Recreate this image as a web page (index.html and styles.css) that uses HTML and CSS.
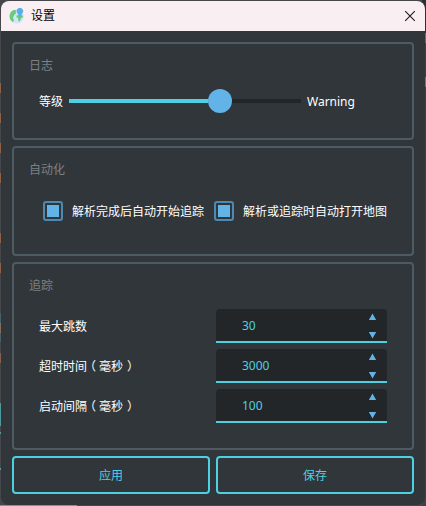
FILE: index.html
```html
<!DOCTYPE html>
<html lang="zh-CN">
<head>
<meta charset="utf-8">
<title>设置</title>
<link rel="stylesheet" href="styles.css">
</head>
<body>
<div class="window">
  <header class="titlebar">
    <svg class="logo" width="16" height="16" viewBox="0 0 16 16"><circle cx="7.6" cy="8.4" r="7.2" fill="#cfe6fb"/><path d="M5 2C1.800 3 .3 6 .6 9c.3 2.300 1.500 4 3.200 4.900L5 12.500 4 9.500l1.200-2.500 1.700-1.600L6.800 2z" fill="#6cca78"/><path d="M7.500 7.500l2-.5 4 .3.500 1.700-2 1.500-1.500 3.200-1.500-1.500.300-2-1.800-1z" fill="#6cca78"/><path d="M10.900 9.500L8.300 5A3.200 3.200 0 1 1 13.500 5z" fill="#5aaee8"/></svg>
    <h1 class="title">设置</h1>
    <svg class="close" width="12" height="12" viewBox="0 0 12 12"><path d="M1.200 1.200l9.600 9.600M10.800 1.200L1.200 10.800" stroke="#1c1a1b" stroke-width="1.100"/></svg>
  </header>
  <main class="content">
    <section class="group log">
      <h2>日志</h2>
      <div class="level"><span class="level-label">等级</span><div class="slider"><div class="fill"></div><div class="handle"></div></div><span class="level-value">Warning</span></div>
    </section>
    <section class="group auto">
      <h2>自动化</h2>
      <div class="checks">
        <label class="check"><span class="box"></span><span class="check-text">解析完成后自动开始追踪</span></label>
        <label class="check"><span class="box"></span><span class="check-text">解析或追踪时自动打开地图</span></label>
      </div>
    </section>
    <section class="group trace">
      <h2>追踪</h2>
      <div class="fields">
        <div class="field"><span class="name">最大跳数</span><div class="spin"><span>30</span><svg width="8" height="26" viewBox="0 0 8 26"><path d="M3.500 .5l3.700 6.500H-.2zM3.500 25.500l3.700-6.500H-.2z"/></svg></div></div>
        <div class="field"><span class="name">超时时间<span class="open">（</span>毫秒<span class="shut">）</span></span><div class="spin"><span>3000</span><svg width="8" height="26" viewBox="0 0 8 26"><path d="M3.500 .5l3.700 6.500H-.2zM3.500 25.500l3.700-6.500H-.2z"/></svg></div></div>
        <div class="field"><span class="name">启动间隔<span class="open">（</span>毫秒<span class="shut">）</span></span><div class="spin"><span>100</span><svg width="8" height="26" viewBox="0 0 8 26"><path d="M3.500 .5l3.700 6.500H-.2zM3.500 25.500l3.700-6.500H-.2z"/></svg></div></div>
      </div>
    </section>
    <div class="actions"><button>应用</button><button>保存</button></div>
  </main>
</div>
</body>
</html>
```
FILE: styles.css
```css
* { box-sizing: border-box; }
body {
  margin: 0; padding: 1px; height: 506px; overflow: hidden;
  font: 12px/16px "Noto Sans", "Noto Sans CJK SC", sans-serif; color: #fff;
  /* desktop content visible around the window's edge */
  background:
    linear-gradient(#8a8c8e, #8a8c8e) 0 505px / 77px 1px no-repeat,
    linear-gradient(#45474b 83px, #8f6248 83px 93px, #45474b 93px 113px, #8f6248 113px 123px, #45474b 123px 143px, #8f6248 143px 153px, #45474b 153px 173px, #8f6248 173px 183px, #45474b 183px 233px, #8f6248 233px 243px, #45474b 243px 263px, #8f6248 263px 273px, #45474b 273px 313px, #43636b 313px 323px, #856c5e 323px 333px, #43636b 333px 342px, #45474b 342px 353px, #85604d 353px 363px, #45474b 363px 403px, #4d9a9f 403px 426px, #45474b 426px 432px, #4d9a9f 432px 434px, #45474b 434px 468px, #4d9a9f 468px 470px, #45474b 470px) 0 0 / 4px 506px no-repeat,
    linear-gradient(#2b3038 33px, #64705c 33px 43px, #3c4145 43px 77px, #727b63 77px 87px, #3c4145 87px) 422px 0 / 4px 506px no-repeat,
    #45474b;
}
.window { height: 504px; border-radius: 8px; overflow: hidden; background: #31363b; }
.titlebar { height: 30px; display: flex; align-items: center; padding: 0 9px 0 8px; background: #f9eff3; color: #000; }
.title { flex: 1; margin: 0 0 0 6px; font-size: 12px; font-weight: 400; }
.close { display: block; }
.content { padding: 11px; display: flex; flex-direction: column; gap: 6px; }
.group { border: 2px solid #4f5b62; border-radius: 4px; padding: 14px 15px 0; }
.group h2 { margin: 0; font-size: 12px; line-height: 16px; font-weight: 400; color: #7c8184; }
.log { height: 98px; }
.auto { height: 110px; }
.trace { height: 188px; }
.level { display: flex; align-items: center; height: 24px; margin: 15px 0 0 10px; }
.level-label { width: 30px; padding-top: 2px; }
.level-value { padding-top: 2px; }
.slider { width: 232px; height: 4px; margin-right: 6px; background: #232629; display: flex; align-items: center; }
.fill { width: 139px; height: 4px; background: #4dd0e1; }
.handle { width: 24px; height: 24px; flex: none; border-radius: 50%; background: #62b3e7; }
.checks { display: flex; margin: 23px 0 0 14px; }
.check { display: flex; align-items: center; width: 171px; flex: none; height: 20px; white-space: nowrap; }
.check-text { padding-top: 2px; }
.box { width: 20px; height: 20px; flex: none; margin-right: 9px; border: 2px solid #4c8ab1; border-radius: 3px; padding: 2px; background: #62b3e7 content-box; }
.fields { display: flex; flex-direction: column; gap: 6px; margin: 15px 0 0 10px; }
.field { display: flex; align-items: center; height: 34px; }
.name { width: 177px; padding-top: 2px; }
/* half-width parentheses centred in full-width cells */
.open, .shut { font-feature-settings: "halt"; }
.open { margin: 0 3px; }
.shut { margin: 0 2px 0 4px; }
.spin { width: 171px; height: 34px; padding: 0 10px 0 26px; display: flex; align-items: center; justify-content: space-between; background: #232629; border-bottom: 2px solid #4dd0e1; border-radius: 4px 4px 0 0; color: #4dd0e1; }
.spin span { padding-top: 2px; }
.spin svg { fill: #62b3e7; margin-top: 1px; overflow: visible; }
.actions { display: grid; grid-template-columns: 1fr 1fr; gap: 6px; }
.actions button { height: 38px; padding: 2px 0 0; border: 2px solid #4dd0e1; border-radius: 4px; background: transparent; color: #4dd0e1; font: inherit; }
```
